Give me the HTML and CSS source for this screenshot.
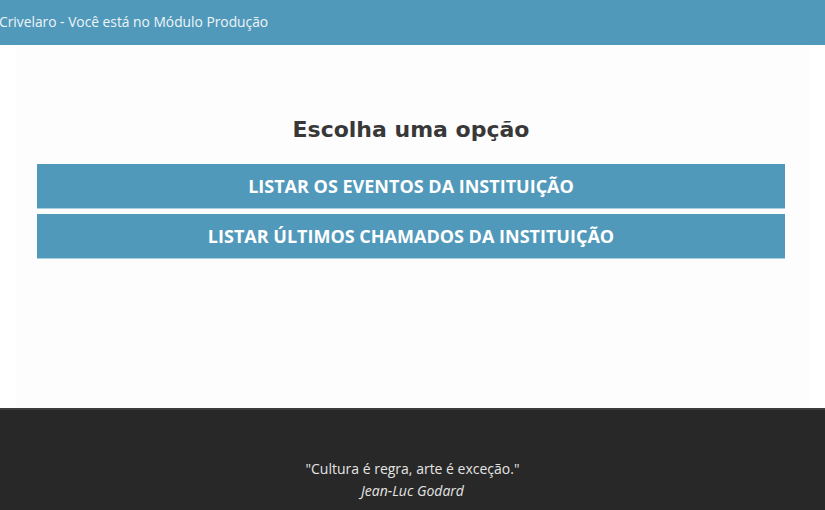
FILE: index.html
```html
<!DOCTYPE html>
<html lang="pt-BR">
<head>
<meta charset="utf-8">
<title>Módulo Produção</title>
<link rel="stylesheet" href="styles.css">
</head>
<body>
<header class="topbar">
  <span class="brand">Crivelaro - Você está no Módulo Produção</span>
</header>
<main class="content">
  <div class="panel">
    <h1 class="title">Escolha uma opção</h1>
    <a class="option" href="#">Listar os eventos da instituição</a>
    <a class="option" href="#">Listar últimos chamados da instituição</a>
  </div>
</main>
<footer class="footer">
  <p class="quote">"Cultura é regra, arte é exceção."</p>
  <p class="author">Jean-Luc Godard</p>
</footer>
</body>
</html>
```
FILE: styles.css
```css
* { box-sizing: border-box; }
html, body { margin: 0; padding: 0; }
body {
  font-family: "Open Sans", "Liberation Sans", sans-serif;
  background: #ffffff;
  color: #333;
}
.topbar {
  height: 45px;
  background: #5199bb;
  display: flex;
  align-items: center;
}
.brand {
  color: #eef5f8;
  font-size: 13.8px;
  margin-left: -1px;
  margin-top: -3px;
}
.content {
  height: 363px;
  padding: 0 16px;
}
.panel {
  height: 100%;
  background: #fdfdfd;
  padding: 70px 24px 0 21px;
  display: flex;
  flex-direction: column;
  gap: 5px;
}
.title {
  margin: 0 0 14px;
  text-align: center;
  font-family: "DejaVu Sans", "Inter", sans-serif;
  font-weight: 700;
  font-size: 22px;
  color: #383838;
  height: 30px;
  line-height: 30px;
}
.option {
  display: block;
  height: 45px;
  line-height: 44px;
  background: #5199bb;
  border-bottom: 1px solid #a9d0e0;
  color: #ffffff;
  text-decoration: none;
  text-align: center;
  text-transform: uppercase;
  font-weight: 700;
  font-size: 18px;
}
.footer {
  height: 102px;
  background: #282828;
  border-top: 2px solid #3c3c3c;
  padding-top: 49px;
  text-align: center;
  color: #e4e4e4;
  font-size: 14px;
}
.quote { margin: 0; line-height: 20px; }
.author { margin: 2px 0 0; font-style: italic; line-height: 20px; }
```
